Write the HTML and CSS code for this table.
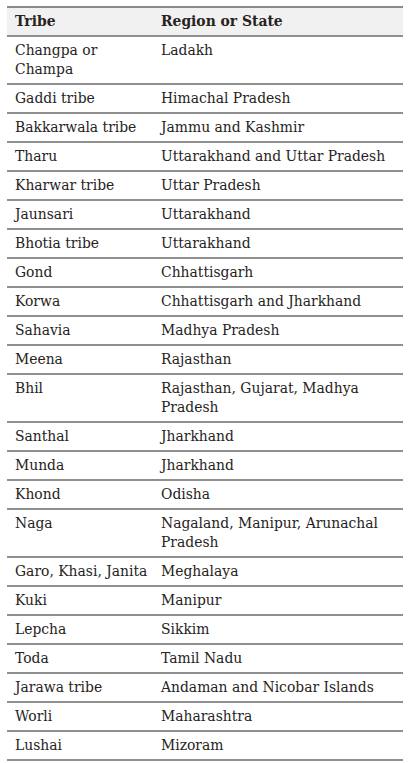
FILE: index.html
```html
<!DOCTYPE html>
<html lang="en">
<head>
<meta charset="utf-8">
<title>Tribes</title>
<link rel="stylesheet" href="styles.css">
</head>
<body>
<table class="tribes">
<thead>
<tr><th class="c1">Tribe</th><th>Region or State</th></tr>
</thead>
<tbody>
<tr><td>Changpa or Champa</td><td>Ladakh</td></tr>
<tr><td>Gaddi tribe</td><td>Himachal Pradesh</td></tr>
<tr><td>Bakkarwala tribe</td><td>Jammu and Kashmir</td></tr>
<tr><td>Tharu</td><td>Uttarakhand and Uttar Pradesh</td></tr>
<tr><td>Kharwar tribe</td><td>Uttar Pradesh</td></tr>
<tr><td>Jaunsari</td><td>Uttarakhand</td></tr>
<tr><td>Bhotia tribe</td><td>Uttarakhand</td></tr>
<tr><td>Gond</td><td>Chhattisgarh</td></tr>
<tr><td>Korwa</td><td>Chhattisgarh and Jharkhand</td></tr>
<tr><td>Sahavia</td><td>Madhya Pradesh</td></tr>
<tr><td>Meena</td><td>Rajasthan</td></tr>
<tr><td>Bhil</td><td>Rajasthan, Gujarat, Madhya Pradesh</td></tr>
<tr><td>Santhal</td><td>Jharkhand</td></tr>
<tr><td>Munda</td><td>Jharkhand</td></tr>
<tr><td>Khond</td><td>Odisha</td></tr>
<tr><td>Naga</td><td>Nagaland, Manipur, Arunachal Pradesh</td></tr>
<tr><td>Garo, Khasi, Janita</td><td>Meghalaya</td></tr>
<tr><td>Kuki</td><td>Manipur</td></tr>
<tr><td>Lepcha</td><td>Sikkim</td></tr>
<tr><td>Toda</td><td>Tamil Nadu</td></tr>
<tr><td>Jarawa tribe</td><td>Andaman and Nicobar Islands</td></tr>
<tr><td>Worli</td><td>Maharashtra</td></tr>
<tr><td>Lushai</td><td>Mizoram</td></tr>
</tbody>
</table>
</body>
</html>
```

FILE: styles.css
```css
html, body {
  margin: 0;
  background: #ffffff;
}
body {
  padding: 6px 6px 0 7px;
  font-family: "DejaVu Serif", "Liberation Serif", serif;
  font-size: 13.9px;
  color: #262322;
}
.tribes {
  width: 396px;
  border-collapse: collapse;
  border-top: 2px solid #8a8a8a;
  table-layout: fixed;
}
.tribes th,
.tribes td {
  text-align: left;
  vertical-align: top;
  padding: 4px 8px 4px 8px;
  line-height: 19px;
  border-bottom: 2px solid #8f8f8f;
}
.tribes th {
  background: #f1f1f1;
  font-weight: bold;
}
.tribes th:first-child,
.tribes td:first-child {
  padding-right: 2px;
}
.tribes .c1 {
  width: 136px;
}
```
